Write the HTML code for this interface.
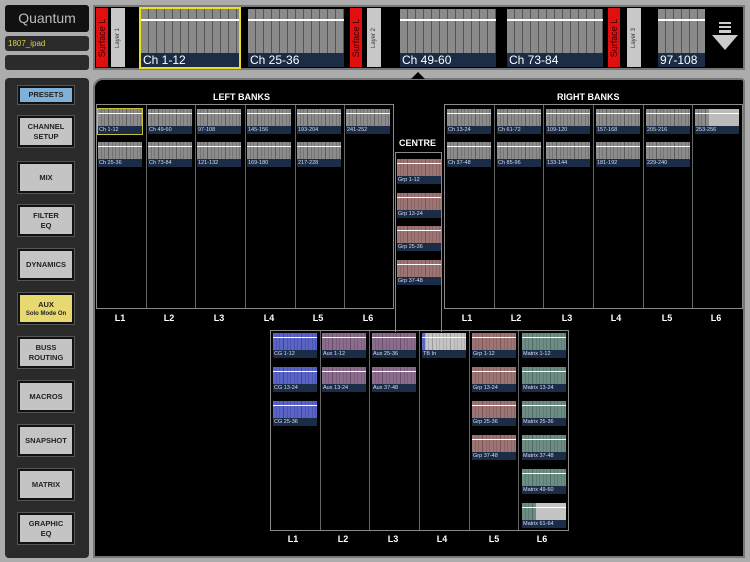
<!DOCTYPE html>
<html><head><meta charset="utf-8"><style>
*{margin:0;padding:0;box-sizing:border-box}
body{width:750px;height:562px;background:#acacac;position:relative;overflow:hidden;font-family:"Liberation Sans",sans-serif}
.a{position:absolute}
.box{position:absolute;background:#2b2b2b;border-radius:3px}
.strip{position:absolute;left:93px;top:5px;width:652px;height:65px;background:#000;border:2px solid #777}
.big{position:absolute;top:9px;height:58px;background:repeating-linear-gradient(90deg,#8a8a8a 0 7px,#555 7px 8px)}
.big:before{content:"";position:absolute;left:0;right:0;top:10px;height:2px;background:#fff}
.big span{position:absolute;left:0;right:0;bottom:0;height:14px;background:#1a2c46;color:#fff;font-size:12px;line-height:14px;padding-left:2px}
.red{position:absolute;top:8px;height:59px;width:12px;background:#e01010;color:#300;font-size:9px}
.red span,.lay span{position:absolute;left:50%;top:50%;transform:translate(-50%,-50%) rotate(-90deg);white-space:nowrap}
.lay{position:absolute;top:8px;height:59px;width:14px;background:#c8c8c8;color:#333;font-size:6px}
.side{position:absolute;left:5px;top:78px;width:84px;height:480px;background:#2a2a2a;border-radius:4px}
.btn{position:absolute;left:18px;width:56px;height:31px;background:#c4c4c4;border:2px solid #111;box-shadow:0 0 0 1px #555;font-size:7.5px;font-weight:bold;color:#222;text-align:center;display:flex;flex-direction:column;align-items:center;justify-content:center;line-height:10px}
.main{position:absolute;left:93px;top:78px;width:652px;height:480px;background:#000;border:2px solid #777;border-radius:10px 4px 0 0}
.t{position:absolute;width:44px;height:25px;background:repeating-linear-gradient(90deg,#8c8c8c 0 3px,#5c5c5c 3px 3.6px)}
.t:before{content:"";position:absolute;left:0;right:0;top:4px;height:1px;background:#fff}
.t span{position:absolute;left:0;right:0;bottom:0;height:8px;background:#1a2c46;color:#dde;font-size:5.5px;line-height:8px;padding-left:1px;white-space:nowrap}
.b{background:repeating-linear-gradient(90deg,#5a64c4 0 3px,#3c44a0 3px 3.6px)}
.p{background:repeating-linear-gradient(90deg,#8c6c8c 0 3px,#6a4c6a 3px 3.6px)}
.r{background:repeating-linear-gradient(90deg,#9c7474 0 3px,#7a5454 3px 3.6px)}
.g{background:repeating-linear-gradient(90deg,#6c8c84 0 3px,#4c6a62 3px 3.6px)}
.ol{position:absolute;border:1px solid #8a8a8a}
.vl{position:absolute;width:1px;background:#666}
.lb{position:absolute;color:#fff;font-weight:bold;font-size:9px;width:30px;text-align:center}
.h{position:absolute;color:#fff;font-weight:bold;font-size:9px}
</style></head><body>
<div class="box" style="left:5px;top:5px;width:84px;height:27px;background:#111;color:#bbb;font-size:14px;text-align:center;line-height:27px;font-weight:300">Quantum</div>
<div class="box" style="left:5px;top:36px;width:84px;height:15px;color:#e0d040;font-size:8px;line-height:15px;padding-left:3px">1807_ipad</div>
<div class="box" style="left:5px;top:55px;width:84px;height:15px"></div>

<div class="strip"></div>
<div class="red" style="left:96px"><span>Surface L</span></div>
<div class="lay" style="left:111px"><span>Layer 1</span></div>
<div class="big" style="left:141px;width:98px;outline:2px solid #e8e020"><span>Ch 1-12</span></div>
<div class="big" style="left:248px;width:96px"><span>Ch 25-36</span></div>
<div class="red" style="left:350px"><span>Surface L</span></div>
<div class="lay" style="left:367px"><span>Layer 2</span></div>
<div class="big" style="left:400px;width:96px"><span>Ch 49-60</span></div>
<div class="big" style="left:507px;width:96px"><span>Ch 73-84</span></div>
<div class="red" style="left:608px"><span>Surface L</span></div>
<div class="lay" style="left:627px"><span>Layer 3</span></div>
<div class="big" style="left:658px;width:47px"><span>97-108</span></div>
<svg class="a" style="left:712px;top:22px" width="26" height="30"><g fill="#ccc"><rect x="7" y="0" width="12" height="2"/><rect x="7" y="4" width="12" height="2"/><rect x="7" y="8" width="12" height="3"/><polygon points="0,13 26,13 13,28"/></g></svg>

<div class="side"></div>
<div class="btn" style="top:86px;height:18px;background:#7fb0d8">PRESETS</div>
<div class="btn" style="top:116px"><div>CHANNEL</div><div>SETUP</div></div>
<div class="btn" style="top:162px">MIX</div>
<div class="btn" style="top:205px"><div>FILTER</div><div>EQ</div></div>
<div class="btn" style="top:249px">DYNAMICS</div>
<div class="btn" style="top:293px;background:#e8d870"><div>AUX</div><div style="font-size:6px;line-height:8px">Solo Mode On</div></div>
<div class="btn" style="top:337px"><div>BUSS</div><div>ROUTING</div></div>
<div class="btn" style="top:381px">MACROS</div>
<div class="btn" style="top:425px">SNAPSHOT</div>
<div class="btn" style="top:469px">MATRIX</div>
<div class="btn" style="top:513px"><div>GRAPHIC</div><div>EQ</div></div>

<div class="main"></div>
<div class="a" style="left:411px;top:72px;width:0;height:0;border-left:7px solid transparent;border-right:7px solid transparent;border-bottom:7px solid #000"></div>

<div class="h" style="left:213px;top:92px">LEFT BANKS</div>
<div class="h" style="left:557px;top:92px">RIGHT BANKS</div>
<div class="h" style="left:399px;top:138px">CENTRE</div>

<div class="ol" style="left:96px;top:104px;width:298px;height:205px"></div>
<div class="vl" style="left:146px;top:105px;height:203px"></div><div class="vl" style="left:195px;top:105px;height:203px"></div><div class="vl" style="left:245px;top:105px;height:203px"></div><div class="vl" style="left:295px;top:105px;height:203px"></div><div class="vl" style="left:344px;top:105px;height:203px"></div>
<div class="ol" style="left:444px;top:104px;width:299px;height:205px"></div>
<div class="vl" style="left:494px;top:105px;height:203px"></div><div class="vl" style="left:543px;top:105px;height:203px"></div><div class="vl" style="left:593px;top:105px;height:203px"></div><div class="vl" style="left:643px;top:105px;height:203px"></div><div class="vl" style="left:692px;top:105px;height:203px"></div>
<div class="ol" style="left:395px;top:152px;width:47px;height:180px;border-bottom:none"></div>
<div class="ol" style="left:270px;top:330px;width:299px;height:201px"></div>
<div class="vl" style="left:320px;top:331px;height:199px"></div><div class="vl" style="left:369px;top:331px;height:199px"></div><div class="vl" style="left:419px;top:331px;height:199px"></div><div class="vl" style="left:469px;top:331px;height:199px"></div><div class="vl" style="left:518px;top:331px;height:199px"></div>

<div class="t" style="left:98px;top:109px;outline:1px solid #c8c030"><span>Ch 1-12</span></div>
<div class="t" style="left:148px;top:109px"><span>Ch 49-60</span></div>
<div class="t" style="left:197px;top:109px"><span>97-108</span></div>
<div class="t" style="left:247px;top:109px"><span>145-156</span></div>
<div class="t" style="left:297px;top:109px"><span>193-204</span></div>
<div class="t" style="left:346px;top:109px"><span>241-252</span></div>
<div class="t" style="left:98px;top:142px"><span>Ch 25-36</span></div>
<div class="t" style="left:148px;top:142px"><span>Ch 73-84</span></div>
<div class="t" style="left:197px;top:142px"><span>121-132</span></div>
<div class="t" style="left:247px;top:142px"><span>169-180</span></div>
<div class="t" style="left:297px;top:142px"><span>217-228</span></div>

<div class="t" style="left:447px;top:109px"><span>Ch 13-24</span></div>
<div class="t" style="left:497px;top:109px"><span>Ch 61-72</span></div>
<div class="t" style="left:546px;top:109px"><span>109-120</span></div>
<div class="t" style="left:596px;top:109px"><span>157-168</span></div>
<div class="t" style="left:646px;top:109px"><span>205-216</span></div>
<div class="t" style="left:695px;top:109px;background:linear-gradient(90deg,transparent 0 14px,#bbb 14px),repeating-linear-gradient(90deg,#8c8c8c 0 3px,#5c5c5c 3px 3.6px)"><span>253-256</span></div>
<div class="t" style="left:447px;top:142px"><span>Ch 37-48</span></div>
<div class="t" style="left:497px;top:142px"><span>Ch 85-96</span></div>
<div class="t" style="left:546px;top:142px"><span>133-144</span></div>
<div class="t" style="left:596px;top:142px"><span>181-192</span></div>
<div class="t" style="left:646px;top:142px"><span>229-240</span></div>

<div class="t r" style="left:397px;top:159px"><span>Grp 1-12</span></div>
<div class="t r" style="left:397px;top:193px"><span>Grp 13-24</span></div>
<div class="t r" style="left:397px;top:226px"><span>Grp 25-36</span></div>
<div class="t r" style="left:397px;top:260px"><span>Grp 37-48</span></div>

<div class="t b" style="left:273px;top:333px"><span>CG 1-12</span></div>
<div class="t b" style="left:273px;top:367px"><span>CG 13-24</span></div>
<div class="t b" style="left:273px;top:401px"><span>CG 25-36</span></div>
<div class="t p" style="left:322px;top:333px"><span>Aux 1-12</span></div>
<div class="t p" style="left:322px;top:367px"><span>Aux 13-24</span></div>
<div class="t p" style="left:372px;top:333px"><span>Aux 25-36</span></div>
<div class="t p" style="left:372px;top:367px"><span>Aux 37-48</span></div>
<div class="t" style="left:422px;top:333px;background:linear-gradient(90deg,#5a64c4 0 3px,transparent 3px),repeating-linear-gradient(90deg,#c4c4c4 0 3px,#999 3px 3.6px)"><span>TB In</span></div>
<div class="t r" style="left:472px;top:333px"><span>Grp 1-12</span></div>
<div class="t r" style="left:472px;top:367px"><span>Grp 13-24</span></div>
<div class="t r" style="left:472px;top:401px"><span>Grp 25-36</span></div>
<div class="t r" style="left:472px;top:435px"><span>Grp 37-48</span></div>
<div class="t g" style="left:522px;top:333px"><span>Matrix 1-12</span></div>
<div class="t g" style="left:522px;top:367px"><span>Matrix 13-24</span></div>
<div class="t g" style="left:522px;top:401px"><span>Matrix 25-36</span></div>
<div class="t g" style="left:522px;top:435px"><span>Matrix 37-48</span></div>
<div class="t g" style="left:522px;top:469px"><span>Matrix 49-60</span></div>
<div class="t" style="left:522px;top:503px;background:linear-gradient(90deg,transparent 0 14px,#c4c4c4 14px),repeating-linear-gradient(90deg,#6c8c84 0 3px,#4c6a62 3px 3.6px)"><span>Matrix 61-64</span></div>

<div class="lb" style="left:105px;top:313px">L1</div><div class="lb" style="left:154px;top:313px">L2</div><div class="lb" style="left:204px;top:313px">L3</div><div class="lb" style="left:254px;top:313px">L4</div><div class="lb" style="left:303px;top:313px">L5</div><div class="lb" style="left:353px;top:313px">L6</div>
<div class="lb" style="left:452px;top:313px">L1</div><div class="lb" style="left:501px;top:313px">L2</div><div class="lb" style="left:552px;top:313px">L3</div><div class="lb" style="left:601px;top:313px">L4</div><div class="lb" style="left:652px;top:313px">L5</div><div class="lb" style="left:701px;top:313px">L6</div>
<div class="lb" style="left:278px;top:534px">L1</div><div class="lb" style="left:328px;top:534px">L2</div><div class="lb" style="left:378px;top:534px">L3</div><div class="lb" style="left:427px;top:534px">L4</div><div class="lb" style="left:479px;top:534px">L5</div><div class="lb" style="left:527px;top:534px">L6</div>
</body></html>
